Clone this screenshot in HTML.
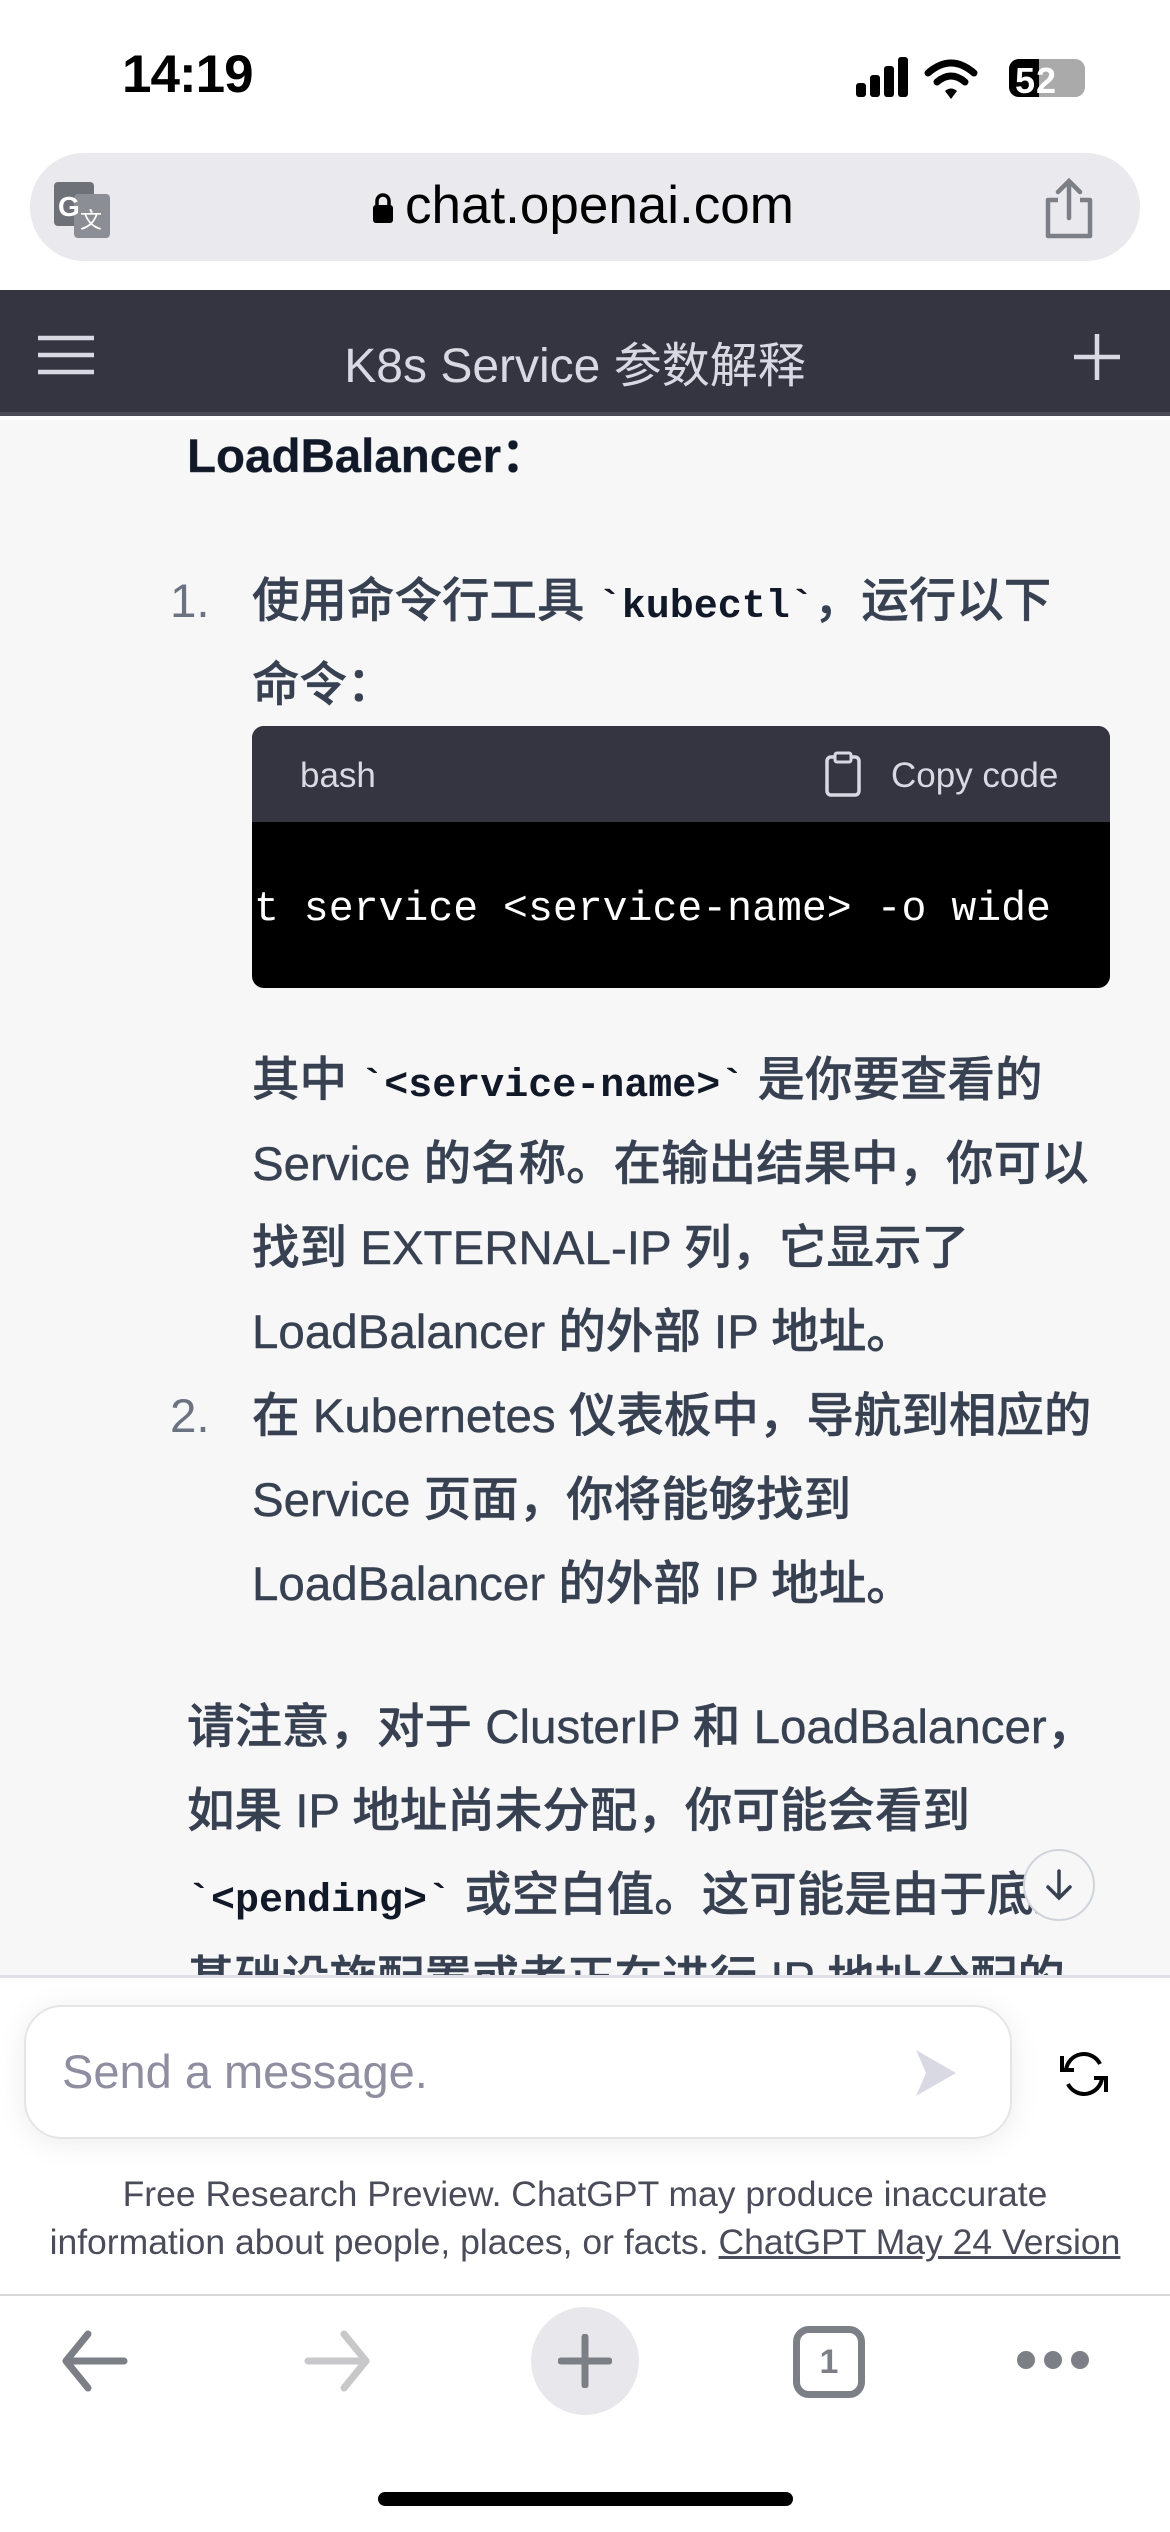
<!DOCTYPE html>
<html><head><meta charset="utf-8"><style>
*{margin:0;padding:0;box-sizing:border-box}
body{width:1170px;height:2532px;position:relative;overflow:hidden;background:#fff;font-family:"Liberation Sans","Noto Sans CJK SC",sans-serif;}
.a{position:absolute;white-space:nowrap}
.t{color:#374151;font-size:47.5px;line-height:84px;font-weight:500;-webkit-text-stroke:0.4px #374151}
code{font-family:"Liberation Mono","Noto Sans CJK SC",monospace;font-weight:bold;color:#111827;font-size:40px;-webkit-text-stroke:0}
</style></head><body>
<!-- status bar -->
<div class="a" style="left:122px;top:44px;font-size:53px;font-weight:bold;color:#000;letter-spacing:-1px">14:19</div>
<svg class="a" style="left:855px;top:55px" width="240" height="50">
<rect x="1" y="28" width="10" height="14" rx="3" fill="#000"/><rect x="15" y="20" width="10" height="22" rx="3" fill="#000"/><rect x="29" y="11" width="10" height="31" rx="3" fill="#000"/><rect x="43" y="2" width="10" height="40" rx="3" fill="#000"/>
<path d="M73 18 Q96 -2 119 18" stroke="#000" stroke-width="7" fill="none" stroke-linecap="round"/><path d="M82 27 Q96 15 110 27" stroke="#000" stroke-width="7" fill="none" stroke-linecap="round"/><path d="M90 36 L96 44 L102 36 Q96 31 90 36Z" fill="#000"/>
<rect x="154" y="4" width="76" height="38" rx="10" fill="#aaa"/><path d="M164 4 h20 v38 h-20 a10 10 0 0 1 -10 -10 v-18 a10 10 0 0 1 10 -10z" fill="#000"/>
<text x="160" y="38" font-family="Liberation Sans" font-weight="bold" font-size="36" fill="#fff">5</text><text x="181" y="38" font-family="Liberation Sans" font-weight="bold" font-size="36" fill="#fff">2</text>
</svg>
<!-- url bar -->
<div class="a" style="left:30px;top:153px;width:1110px;height:108px;border-radius:54px;background:#e9e9ee"></div>
<svg class="a" style="left:52px;top:180px" width="62" height="60"><rect x="2" y="2" width="40" height="44" rx="4" fill="#6e7177"/><rect x="22" y="14" width="36" height="44" rx="4" fill="#8b8e94"/><text x="6" y="36" font-size="28" font-weight="bold" fill="#fff" font-family="Liberation Sans">G</text><text x="28" y="48" font-size="22" fill="#fff" font-family="Noto Sans CJK SC">文</text></svg>
<svg class="a" style="left:372px;top:192px" width="22" height="32"><rect x="1" y="13" width="20" height="18" rx="3" fill="#000"/><path d="M5 14 V9 a6 6 0 0 1 12 0 V14" stroke="#000" stroke-width="3.5" fill="none"/></svg>
<div class="a" style="left:405px;top:175px;font-size:53px;color:#000">chat.openai.com</div>
<svg class="a" style="left:1040px;top:178px" width="60" height="64"><path d="M18 22 H8 V58 H50 V22 H40" stroke="#7c7f85" stroke-width="4.5" fill="none" stroke-linejoin="round"/><path d="M29 40 V4 M18 14 L29 3 L40 14" stroke="#7c7f85" stroke-width="4.5" fill="none" stroke-linecap="round"/></svg>
<!-- header -->
<div class="a" style="left:0;top:290px;width:1170px;height:126px;background:#343541;border-bottom:4px solid #4a4b57"></div>
<svg class="a" style="left:36px;top:335px" width="62" height="40"><path d="M2 3H58M2 20H58M2 37H58" stroke="#d9d9e3" stroke-width="4.5"/></svg>
<div class="a" style="left:0;width:1150px;text-align:center;top:326px;font-size:48px;color:#d9d9e3">K8s Service 参数解释</div>
<svg class="a" style="left:1072px;top:332px" width="50" height="50"><path d="M25 2V48M2 25H48" stroke="#d9d9e3" stroke-width="4.5"/></svg>
<!-- content -->
<div class="a" style="left:0;top:420px;width:1170px;height:1557px;background:#f7f7f8"></div>
<div class="a t" style="left:187px;top:415px;font-weight:bold;color:#111827">LoadBalancer：</div>
<div class="a t" style="left:170px;top:560px;color:#6b7280;-webkit-text-stroke:0">1.</div>
<div class="a t" style="left:252px;top:560px">使用命令行工具 <code>`kubectl`</code>，运行以下</div>
<div class="a t" style="left:252px;top:644px">命令：</div>
<div class="a" style="left:252px;top:726px;width:858px;height:262px;border-radius:12px;background:#000;overflow:hidden">
 <div style="height:96px;background:#343541;position:relative">
  <div class="a" style="left:48px;top:30px;font-size:35px;color:#d9d9e3">bash</div>
  <svg class="a" style="left:572px;top:24px" width="38" height="48"><rect x="3" y="7" width="32" height="38" rx="4" stroke="#d9d9e3" stroke-width="3.5" fill="none"/><rect x="11" y="3" width="16" height="9" rx="2" stroke="#d9d9e3" stroke-width="3" fill="#343541"/></svg>
  <div class="a" style="left:639px;top:30px;font-size:35px;color:#d9d9e3">Copy code</div>
 </div>
 <div class="a" style="left:2px;top:160px;font-family:'Liberation Mono',monospace;font-size:41.5px;color:#fff">t service &lt;service-name&gt; -o wide</div>
</div>
<div class="a t" style="left:252px;top:1039px">其中 <code>`&lt;service-name&gt;`</code> 是你要查看的</div>
<div class="a t" style="left:252px;top:1123px">Service 的名称。在输出结果中，你可以</div>
<div class="a t" style="left:252px;top:1207px">找到 EXTERNAL-IP 列，它显示了</div>
<div class="a t" style="left:252px;top:1291px">LoadBalancer 的外部 IP 地址。</div>
<div class="a t" style="left:170px;top:1375px;color:#6b7280;-webkit-text-stroke:0">2.</div>
<div class="a t" style="left:252px;top:1375px">在 Kubernetes 仪表板中，导航到相应的</div>
<div class="a t" style="left:252px;top:1459px">Service 页面，你将能够找到</div>
<div class="a t" style="left:252px;top:1543px">LoadBalancer 的外部 IP 地址。</div>
<div class="a t" style="left:187px;top:1686px">请注意，对于 ClusterIP 和 LoadBalancer，</div>
<div class="a t" style="left:187px;top:1770px">如果 IP 地址尚未分配，你可能会看到</div>
<div class="a t" style="left:187px;top:1854px"><code>`&lt;pending&gt;`</code> 或空白值。这可能是由于底层</div>
<div class="a t" style="left:187px;top:1938px">基础设施配置或者正在进行 IP 地址分配的</div>
<div class="a" style="left:1023px;top:1849px;width:72px;height:72px;border-radius:50%;border:2px solid #d1d5db;background:#f7f7f8"></div>
<svg class="a" style="left:1043px;top:1867px" width="32" height="36"><path d="M16 4V30M5 20L16 31L27 20" stroke="#374151" stroke-width="3.5" fill="none" stroke-linecap="round"/></svg>
<!-- bottom panel -->
<div class="a" style="left:0;top:1975px;width:1170px;height:557px;background:#fff;border-top:3px solid #e0e0e6"></div>
<div class="a" style="left:24px;top:2005px;width:988px;height:134px;border-radius:38px;border:2px solid #e5e5e5;background:#fff;box-shadow:0 4px 30px rgba(0,0,0,0.08)"></div>
<div class="a" style="left:62px;top:2044px;font-size:47px;color:#8e8ea0">Send a message.</div>
<svg class="a" style="left:912px;top:2048px" width="48" height="50"><path d="M4 2L44 25L4 48L14 25Z" fill="#d9d9e3"/></svg>
<svg class="a" style="left:1058px;top:2050px" width="52" height="48"><path d="M8 20 A18 18 0 0 1 42 14 M44 28 A18 18 0 0 1 10 34" stroke="#000" stroke-width="4" fill="none"/><path d="M4 6 V20 H16 M48 42 V28 H36" stroke="#000" stroke-width="4" fill="none"/></svg>
<div class="a" style="left:0;width:1170px;text-align:center;top:2170px;font-size:35.5px;line-height:48px;color:#4b4c5a;white-space:normal">Free Research Preview. ChatGPT may produce inaccurate<br>information about people, places, or facts. <u>ChatGPT May 24 Version</u></div>
<div class="a" style="left:0;top:2294px;width:1170px;height:2px;background:#d6d6d6"></div>
<!-- toolbar -->
<svg class="a" style="left:58px;top:2328px" width="72" height="66"><path d="M66 33H8M30 6L8 33L30 60" stroke="#7c7f85" stroke-width="7" fill="none" stroke-linecap="round" stroke-linejoin="round"/></svg>
<svg class="a" style="left:304px;top:2328px" width="72" height="66"><path d="M4 33H62M40 6L62 33L40 60" stroke="#c8c8cb" stroke-width="7" fill="none" stroke-linecap="round" stroke-linejoin="round"/></svg>
<div class="a" style="left:531px;top:2307px;width:108px;height:108px;border-radius:50%;background:#e8e8ec"></div>
<svg class="a" style="left:558px;top:2334px" width="54" height="54"><path d="M27 3V51M3 27H51" stroke="#7c7f85" stroke-width="7" stroke-linecap="round"/></svg>
<div class="a" style="left:793px;top:2326px;width:72px;height:72px;border:7px solid #7c7f85;border-radius:16px;text-align:center;font-size:34px;line-height:58px;font-weight:bold;color:#7c7f85">1</div>
<svg class="a" style="left:1015px;top:2345px" width="76" height="30"><circle cx="11" cy="15" r="9" fill="#7c7f85"/><circle cx="38" cy="15" r="9" fill="#7c7f85"/><circle cx="65" cy="15" r="9" fill="#7c7f85"/></svg>
<div class="a" style="left:378px;top:2492px;width:415px;height:14px;border-radius:7px;background:#000"></div>
</body></html>
